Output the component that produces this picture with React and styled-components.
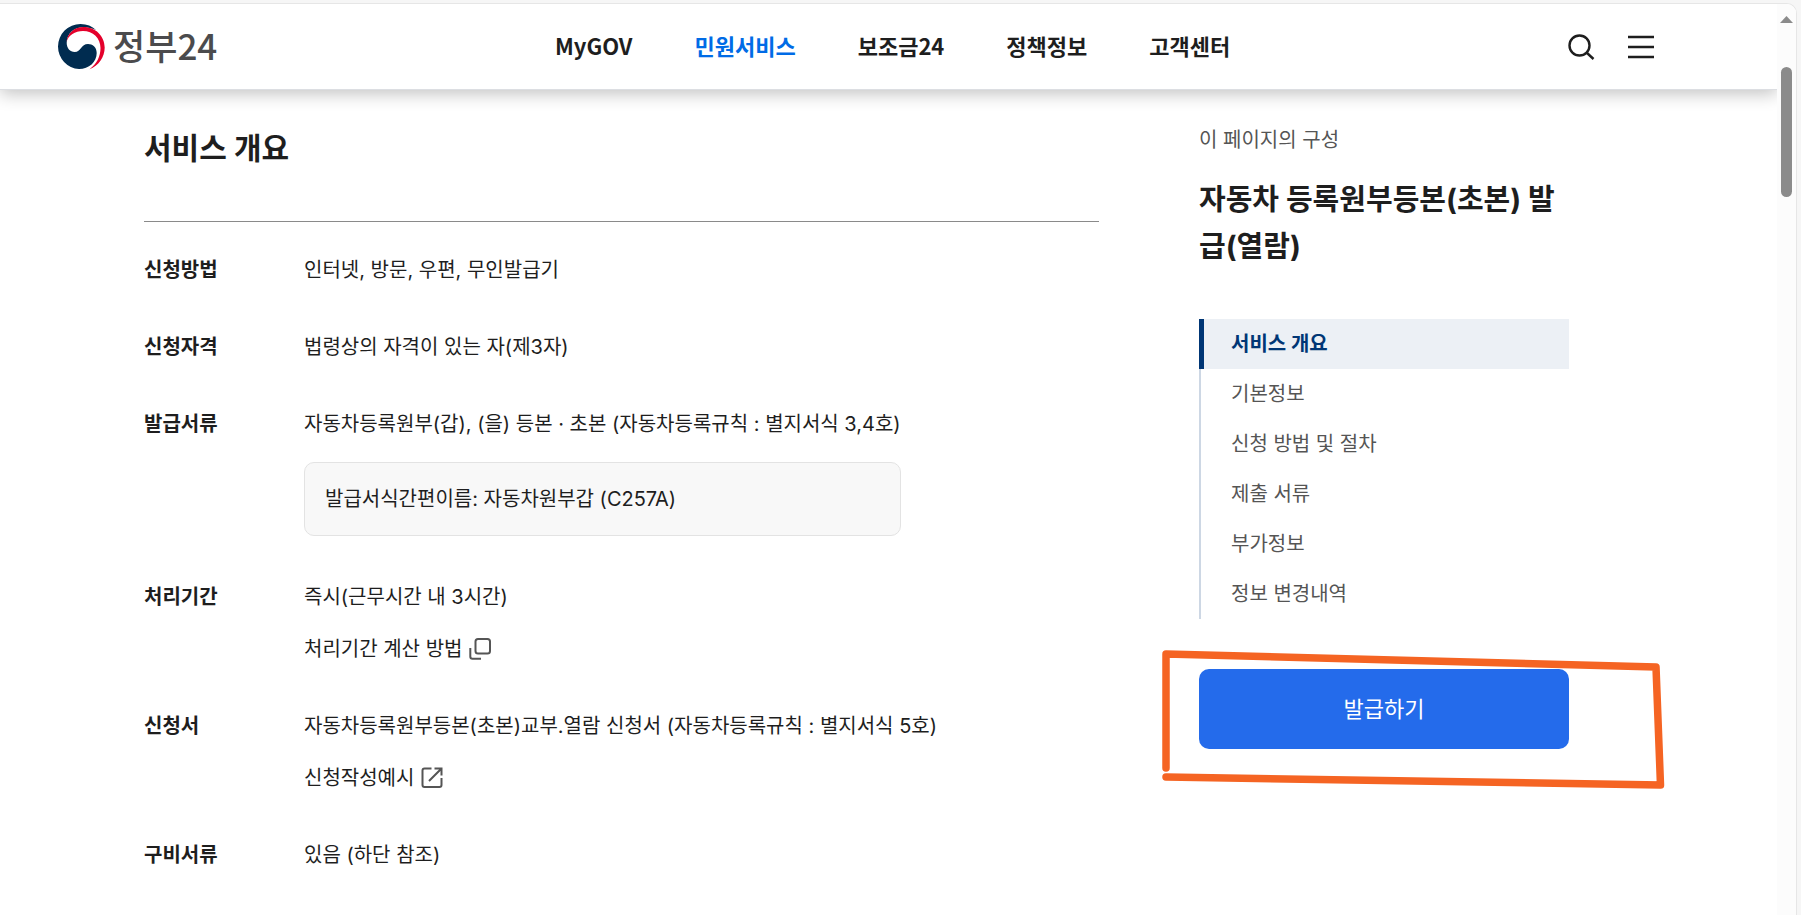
import React, { useState } from 'react'
import styled, { createGlobalStyle } from 'styled-components'

const GlobalStyle = createGlobalStyle`
  * {
    box-sizing: border-box;
  }

  body {
    margin: 0;
    background: #f6f6f6;
    color: #1e1e1e;
    font-family: Inter, "Noto Sans CJK KR", sans-serif;
    font-size: 20px;
    line-height: 34px;
  }

  h1, h2, p, ul, dl, dd {
    margin: 0;
    padding: 0;
  }

  ul {
    list-style: none;
  }

  a {
    color: inherit;
    text-decoration: none;
  }

  button {
    padding: 0;
    border: 0;
    background: none;
    color: inherit;
    font: inherit;
    cursor: pointer;
  }

  svg {
    display: block;
  }
`

const Browser = styled.div`
  height: 100vh;
  padding: 3px 4px 0 0;
`

const Viewport = styled.div`
  display: flex;
  height: 100%;
  overflow: hidden;
  border: solid #e6e6e6;
  border-width: 1px 1px 0 0;
  border-radius: 0 10px 0 0;
  background: #fff;
`

const Page = styled.div`
  flex: 1;
  min-width: 0;
  overflow: hidden;
`

const Header = styled.header`
  display: flex;
  align-items: center;
  justify-content: space-between;
  height: 86px;
  padding: 0 123px 0 58px;
  border-bottom: 1px solid #dcdee2;
  box-shadow: 0 4px 16px rgba(0, 0, 0, 0.24);
  font-family: "Noto Sans CJK KR", "Noto Sans", sans-serif;
`

const Logo = styled.a`
  display: flex;
  align-items: center;
  gap: 8px;
  color: #4b4b4d;
  font-size: 35px;
  font-weight: 500;
`

const LogoText = styled.span`
  padding-bottom: 4px;
`

const Menu = styled.ul`
  display: flex;
  gap: 62px;
  padding-bottom: 2px;
`

const MenuLink = styled.a`
  color: ${p => (p.$active ? '#006be6' : '#1e1e1e')};
  font-size: 22px;
  font-weight: 700;
`

const Tools = styled.div`
  display: flex;
  gap: 33px;
`

const Layout = styled.div`
  display: flex;
  align-items: flex-start;
  gap: 100px;
  padding: 33px 208px 0 144px;
`

const Main = styled.main`
  flex: 1;
  min-width: 0;
`

const Title = styled.h2`
  padding: 1px 0 49px;
  border-bottom: 1px solid #8a8a8a;
  font-size: 30px;
  line-height: 48px;
`

const Rows = styled.dl`
  display: grid;
  gap: 43px;
  padding-top: 31px;
`

const Row = styled.div`
  display: grid;
  grid-template-columns: 160px 1fr;
`

const Term = styled.dt`
  font-weight: 700;
`

const Desc = styled.dd`
  display: grid;
  gap: 18px;
  justify-content: start;
`

const Note = styled.p`
  margin: 3px 0 1px;
  padding: 19px 20px;
  border: 1px solid #e3e3e3;
  border-radius: 10px;
  background: #f8f8f8;
`

const HelpLink = styled.a`
  display: flex;
  align-items: center;
  gap: 7px;
`

const Side = styled.aside`
  width: 370px;
  flex-shrink: 0;
`

const SideLabel = styled.p`
  color: #555;
`

const SideTitle = styled.h1`
  margin: 19px 0 49px;
  font-size: 29px;
  line-height: 47px;
  word-break: break-all;
`

const Toc = styled.ul`
  box-shadow: inset 2px 0 #cdd7e4;
`

const TocLink = styled.a`
  display: block;
  padding: 8px 0 8px ${p => (p.$active ? 27 : 32)}px;
  border-left: ${p => (p.$active ? '5px solid #003675' : 0)};
  background: ${p => (p.$active ? '#ecf0f5' : 'none')};
  color: ${p => (p.$active ? '#003675' : '#555')};
  font-weight: ${p => (p.$active ? 700 : 400)};
`

const Action = styled.div`
  position: relative;
  margin-top: 50px;
`

const Submit = styled.button`
  width: 100%;
  height: 80px;
  border-radius: 10px;
  background: #246beb;
  color: #fff;
  font-size: 22px;
`

const Marker = styled.svg`
  position: absolute;
  top: -20px;
  left: -38px;
  pointer-events: none;
`

const Scrollbar = styled.div`
  display: flex;
  flex-direction: column;
  align-items: center;
  gap: 44px;
  width: 19px;
  padding-top: 12px;
  background: #fcfcfc;
`

const Thumb = styled.div`
  width: 11px;
  height: 130px;
  border-radius: 6px;
  background: #8b8b8b;
`

const menu = ['MyGOV', '민원서비스', '보조금24', '정책정보', '고객센터']

const sections = [
  '서비스 개요',
  '기본정보',
  '신청 방법 및 절차',
  '제출 서류',
  '부가정보',
  '정보 변경내역'
]

const rows = [
  { term: '신청방법', text: '인터넷, 방문, 우편, 무인발급기' },
  { term: '신청자격', text: '법령상의 자격이 있는 자(제3자)' },
  {
    term: '발급서류',
    text: '자동차등록원부(갑), (을) 등본 · 초본 (자동차등록규칙 : 별지서식 3,4호)',
    note: '발급서식간편이름: 자동차원부갑 (C257A)'
  },
  {
    term: '처리기간',
    text: '즉시(근무시간 내 3시간)',
    link: '처리기간 계산 방법',
    icon: <PopupIcon />
  },
  {
    term: '신청서',
    text: '자동차등록원부등본(초본)교부.열람 신청서 (자동차등록규칙 : 별지서식 5호)',
    link: '신청작성예시',
    icon: <ExternalIcon />
  },
  { term: '구비서류', text: '있음 (하단 참조)' }
]

function Emblem() {
  return (
    <svg width="47" height="46" viewBox="0 0 47 46" aria-hidden="true">
      <path
        fill="#002c50"
        d="M38 6C34 2 29 0 22.500 0A22.500 22.500 0 0 0 0 22.500A22.500 22.500 0 0 0 21 45C31 45 38.700 38 38.700 29C38.700 23 34.500 20 30 20C23 20 23 28 16.700 28C12 28 8.700 24 8.700 19C8.700 9 17 3.300 25 3.300C30 3.300 35 4.500 38 6Z"
      />
      <path
        fill="#e4002b"
        d="M8.500 18C9.500 9 16.500 3 25.500 3C37.500 3 46.700 12 46.700 23.500C46.700 33 40.500 42 31.500 45.200C39 40 42.500 32 42.500 24C42.500 14 35 7 25 7C17 7 10.500 11 8.500 18Z"
      />
    </svg>
  )
}

function SearchIcon() {
  return (
    <svg width="27" height="26" viewBox="0 0 27 26" fill="none" stroke="#1e1e1e" strokeWidth="2.400" aria-hidden="true">
      <circle cx="11.500" cy="11.500" r="10" />
      <path d="M18.500 18.500L25.500 25" />
    </svg>
  )
}

function MenuIcon() {
  return (
    <svg width="26" height="26" viewBox="0 0 26 26" stroke="#1e1e1e" strokeWidth="2.400" aria-hidden="true">
      <path d="M0 3H26M0 13H26M0 23H26" />
    </svg>
  )
}

function PopupIcon() {
  return (
    <svg width="22" height="22" viewBox="0 0 22 22" fill="none" stroke="#555" strokeWidth="2" aria-hidden="true">
      <rect x="6.500" y="1" width="14.500" height="14.500" rx="2.500" />
      <path d="M1.300 10V18.500Q1.300 20.700 3.500 20.700H12" />
    </svg>
  )
}

function ExternalIcon() {
  return (
    <svg width="22" height="22" viewBox="0 0 22 22" fill="none" stroke="#555" strokeWidth="2" aria-hidden="true">
      <path d="M10.500 1.500H3.500Q1.500 1.500 1.500 3.500V18Q1.500 20 3.500 20H18.500Q20.500 20 20.500 18V11" />
      <path d="M8 14L20 2M13.500 1.500H20.500V8.500" />
    </svg>
  )
}

export default function App() {
  const [active, setActive] = useState(sections[0])

  return (
    <Browser>
      <GlobalStyle />
      <Viewport>
        <Page>
          <Header>
            <Logo href="#">
              <Emblem />
              <LogoText>정부24</LogoText>
            </Logo>
            <nav>
              <Menu>
                {menu.map(item => (
                  <li key={item}>
                    <MenuLink href="#" $active={item === '민원서비스'}>{item}</MenuLink>
                  </li>
                ))}
              </Menu>
            </nav>
            <Tools>
              <button aria-label="검색"><SearchIcon /></button>
              <button aria-label="전체메뉴"><MenuIcon /></button>
            </Tools>
          </Header>

          <Layout>
            <Main>
              <Title>서비스 개요</Title>
              <Rows>
                {rows.map(row => (
                  <Row key={row.term}>
                    <Term>{row.term}</Term>
                    <Desc>
                      <p>{row.text}</p>
                      {row.note && <Note>{row.note}</Note>}
                      {row.link && (
                        <HelpLink href="#">
                          {row.link}
                          {row.icon}
                        </HelpLink>
                      )}
                    </Desc>
                  </Row>
                ))}
              </Rows>
            </Main>

            <Side>
              <SideLabel>이 페이지의 구성</SideLabel>
              <SideTitle>자동차 등록원부등본(초본) 발급(열람)</SideTitle>
              <Toc>
                {sections.map(name => (
                  <li key={name}>
                    <TocLink href="#" $active={name === active} onClick={() => setActive(name)}>
                      {name}
                    </TocLink>
                  </li>
                ))}
              </Toc>
              <Action>
                <Submit>발급하기</Submit>
                <Marker
                  width="504"
                  height="142"
                  viewBox="0 0 504 142"
                  fill="none"
                  stroke="#f56423"
                  strokeWidth="7.500"
                  strokeLinecap="round"
                  strokeLinejoin="round"
                  aria-hidden="true"
                >
                  <path d="M5 119V5L495 18L499.500 136L5 128" />
                </Marker>
              </Action>
            </Side>
          </Layout>
        </Page>

        <Scrollbar>
          <svg width="13" height="7" viewBox="0 0 13 7" aria-hidden="true">
            <path fill="#8b8b8b" d="M6.500 0L13 7H0Z" />
          </svg>
          <Thumb />
        </Scrollbar>
      </Viewport>
    </Browser>
  )
}
